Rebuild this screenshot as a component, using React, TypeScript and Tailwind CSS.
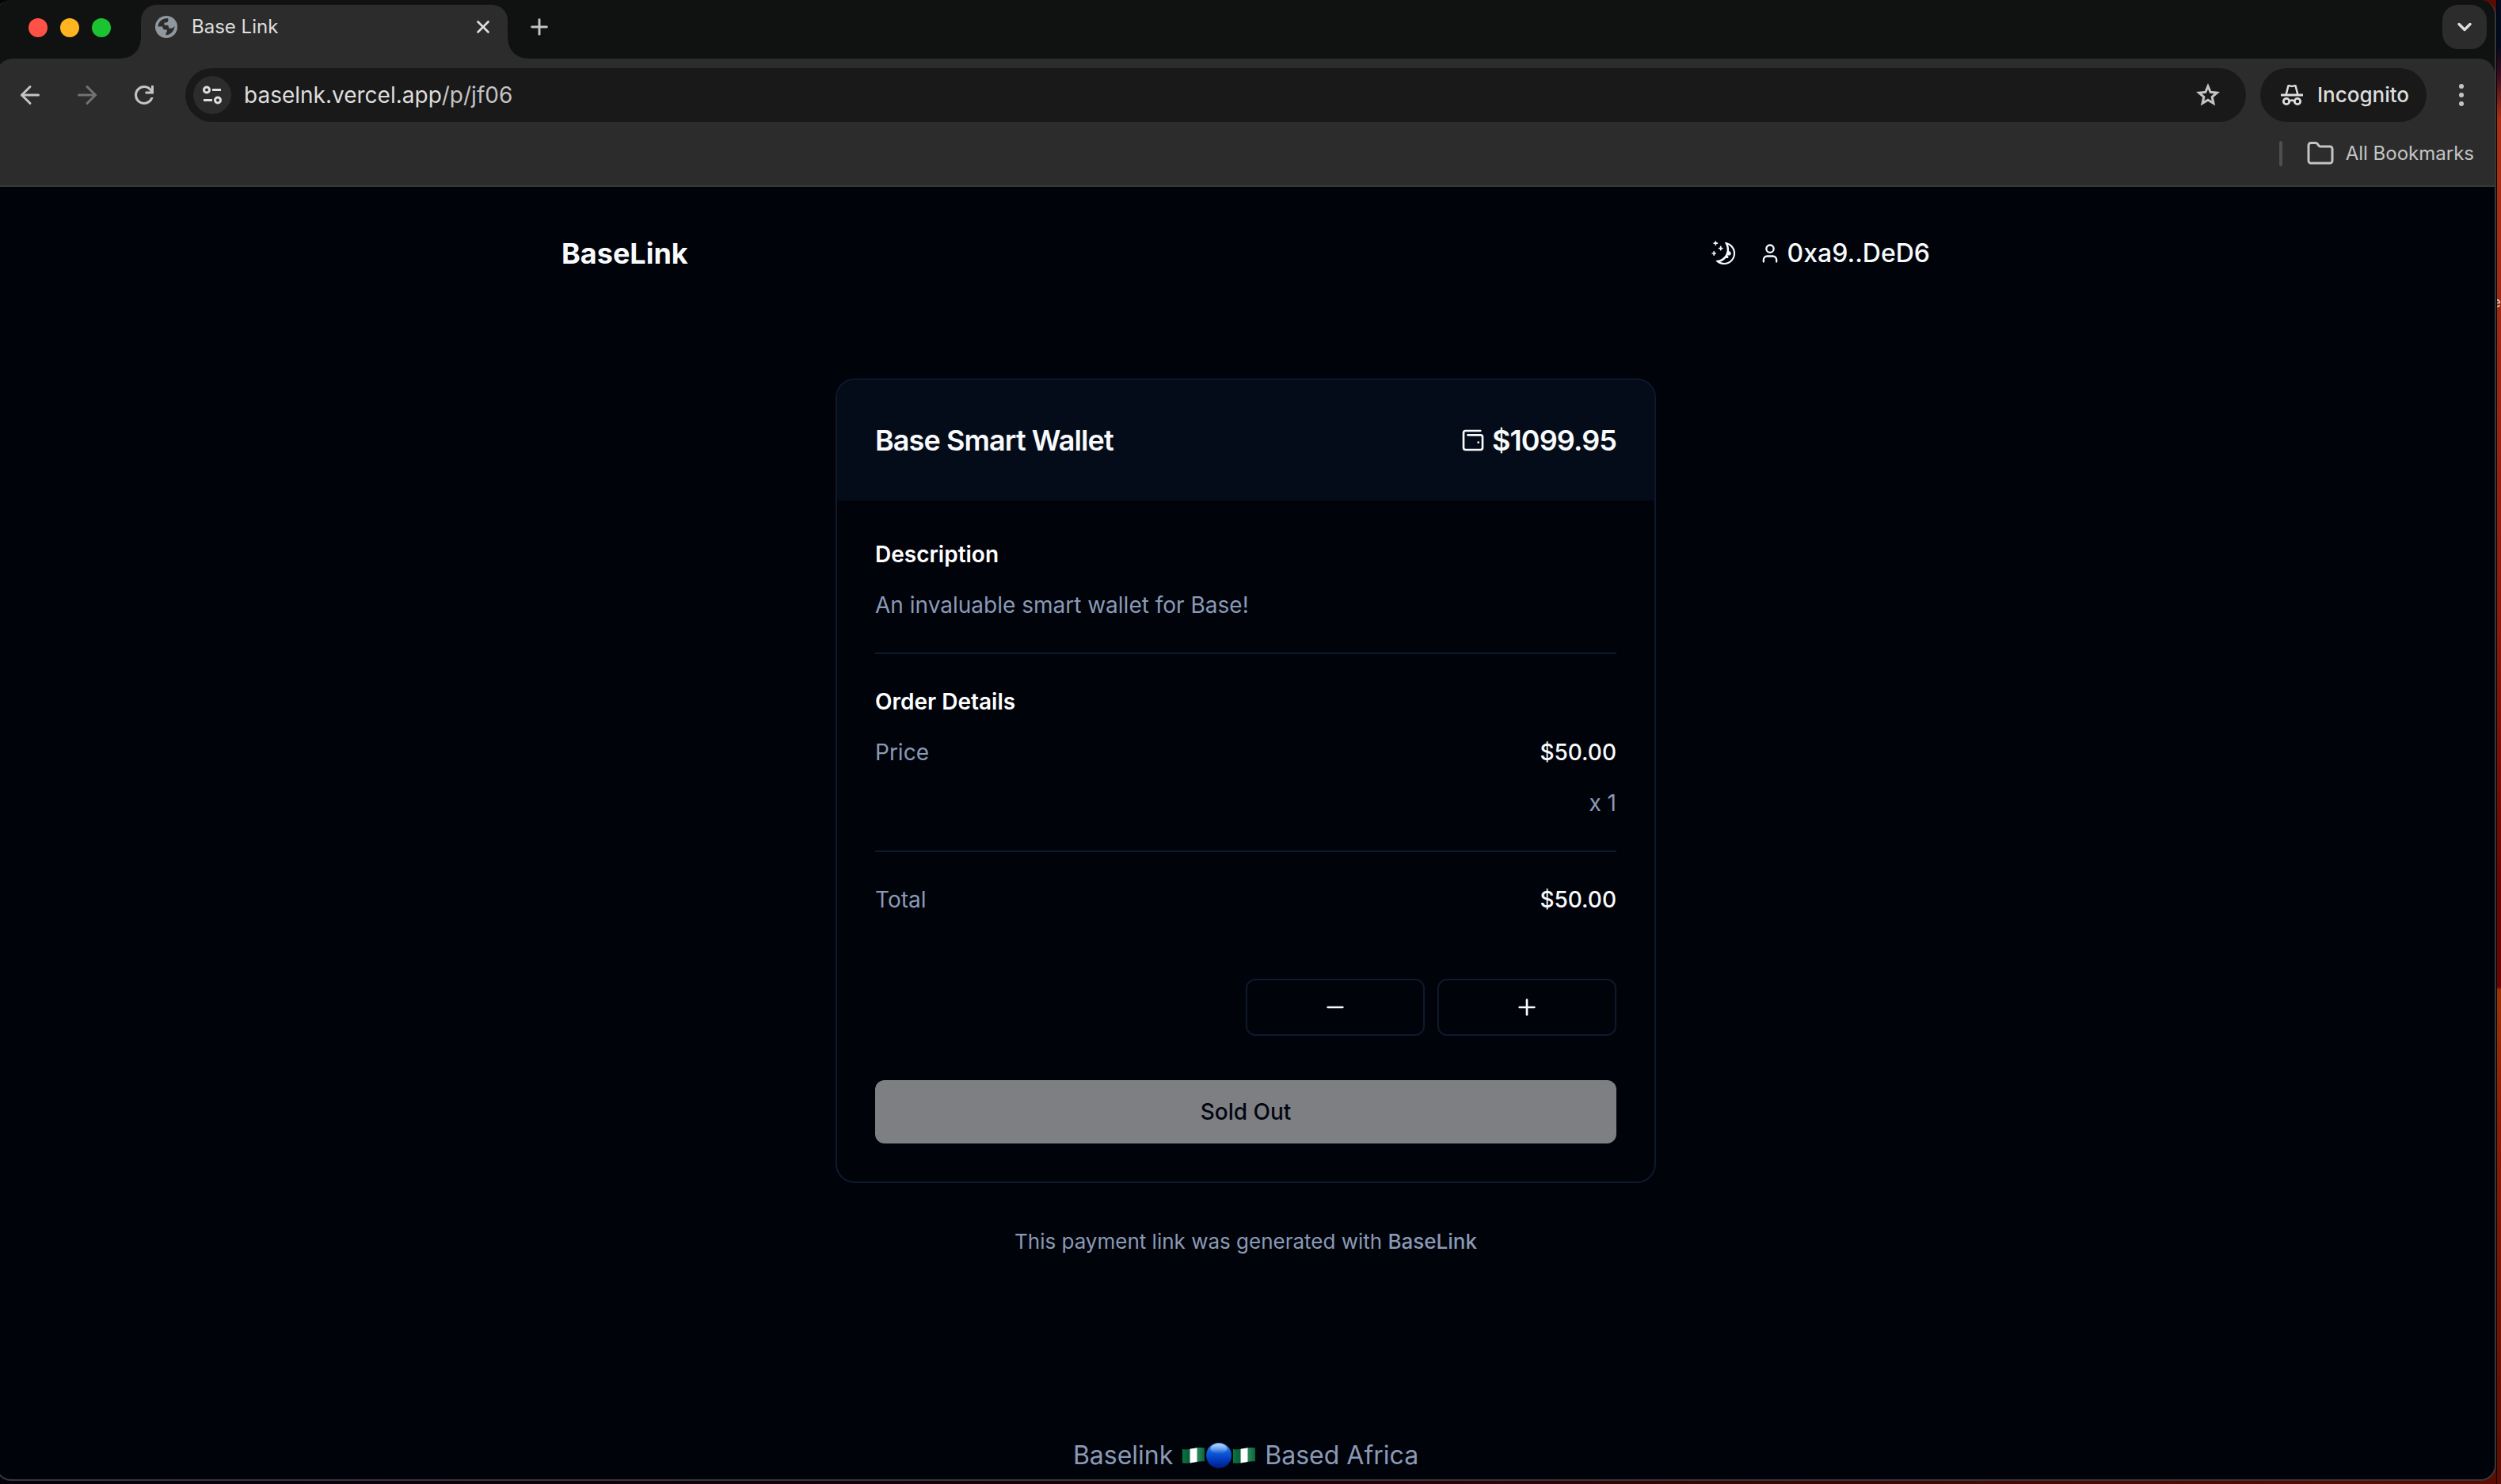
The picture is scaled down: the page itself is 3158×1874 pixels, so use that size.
import React from "react";
import { ArrowLeft, ArrowRight, Folder, Minus, Plus, User, WalletMinimal, X, ChevronDown } from "lucide-react";
import { RxMoon } from "react-icons/rx";

const GlobeIcon = () => (
  <svg viewBox="0 0 24 24" className="size-7 shrink-0" aria-hidden="true">
    <circle cx="12" cy="12" r="12" fill="#8f979f" />
    <path
      d="M3 11.600C3.200 7 7 3 12 2.800h2v2.400c0 1.200-1 2-2.200 2H9.800v2.800h2.800c1.200 0 2 .9 2 2v1.600h2.800c1.600 0 3-1.200 3.600-2.800C21 15.800 17 20.600 11.600 21v-3h1v-3h-2c-1.500 0-2.600-1-2.600-2.600v-.8z"
      fill="#2c2c2c"
    />
  </svg>
);

const ReloadIcon = () => (
  <svg viewBox="0 0 24 24" className="size-9" aria-hidden="true">
    <path
      d="M12 20q-3.350 0-5.675-2.325T4 12t2.325-5.675T12 4q1.725 0 3.300.7125T18 6.750V4h2v7h-7V9h4.200q-.8-1.400-2.187-2.200T12 6Q9.500 6 7.750 7.750T6 12t1.750 4.250T12 18q1.925 0 3.475-1.100T17.650 14h2.100q-.7 2.650-2.850 4.325T12 20"
      fill="currentColor"
    />
  </svg>
);

const TuneIcon = () => (
  <svg viewBox="0 0 26 26" className="size-[26px]" fill="none" stroke="#dedede" strokeWidth="3" aria-hidden="true">
    <circle cx="6" cy="6.500" r="3.500" />
    <path d="M13 6.500h11M2 19.500h11" />
    <circle cx="20" cy="19.500" r="3.500" />
  </svg>
);

const StarIcon = () => (
  <svg viewBox="0 0 24 24" className="size-9" aria-hidden="true">
    <path
      d="M8.850 16.825 12 14.925l3.150 1.925-.825-3.600 2.775-2.400-3.650-.325L12 7.125l-1.450 3.375-3.650.325 2.775 2.425zM5.825 21l1.625-7.025L2 9.250l7.200-.625L12 2l2.800 6.625 7.200.625-5.450 4.725L18.175 21 12 17.275z"
      fill="currentColor"
    />
  </svg>
);

const IncognitoIcon = () => (
  <svg viewBox="0 0 28 28" className="size-7" fill="none" stroke="#dedede" aria-hidden="true">
    <path d="M0 14h28" strokeWidth="3" />
    <path d="M6.500 14 9.400 2.500c1.800-.6 3 .4 4.600.4s2.800-1 4.600-.4L21.500 14" strokeWidth="2.500" strokeLinejoin="round" />
    <circle cx="7" cy="22" r="3.700" strokeWidth="2.800" />
    <circle cx="21" cy="22" r="3.700" strokeWidth="2.800" />
    <path d="M10.500 22c2-1.600 5-1.600 7 0" strokeWidth="2.500" />
  </svg>
);

const FlagIcon = () => (
  <svg viewBox="0 0 28 20" className="h-5 w-7" aria-hidden="true">
    <defs>
      <clipPath id="flag-wave">
        <path d="M0 2c5 1 8 0 14-1s9-1.500 14-.5v17c-5-1-8 .3-14 1.300S5 20.500 0 19.500z" />
      </clipPath>
      <linearGradient id="flag-shade" x1="0" x2="1" y1="0" y2="0">
        <stop offset="0" stopColor="#000" stopOpacity="0.050" />
        <stop offset="0.350" stopColor="#000" stopOpacity="0.250" />
        <stop offset="0.600" stopColor="#fff" stopOpacity="0.150" />
        <stop offset="1" stopColor="#000" stopOpacity="0.200" />
      </linearGradient>
    </defs>
    <g clipPath="url(#flag-wave)">
      <path d="M0 0h28v20H0z" fill="#0b7a45" />
      <path d="M9.500 0h9v20h-9z" fill="#fff" />
      <path d="M0 0h9.500v20H0zM18.500 0H28v20h-9.500z" fill="url(#flag-shade)" />
    </g>
  </svg>
);

const BlueCircle = () => (
  <svg viewBox="0 0 32 32" className="size-8" aria-hidden="true">
    <defs>
      <linearGradient id="ball" x1="0" x2="0" y1="0" y2="1">
        <stop offset="0" stopColor="#5fa0f4" />
        <stop offset="0.350" stopColor="#0f5fdc" />
        <stop offset="0.600" stopColor="#0443c4" />
        <stop offset="1" stopColor="#031a8c" />
      </linearGradient>
      <linearGradient id="shine" x1="0" x2="0" y1="0" y2="1">
        <stop offset="0" stopColor="#cfe4ff" stopOpacity="0.800" />
        <stop offset="1" stopColor="#cfe4ff" stopOpacity="0" />
      </linearGradient>
    </defs>
    <circle cx="16" cy="16" r="16" fill="url(#ball)" />
    <ellipse cx="16" cy="7.500" rx="10.500" ry="6.500" fill="url(#shine)" />
  </svg>
);

const TabStrip = () => (
  <div className="flex h-[74px] items-end bg-[#101211]">
    <div className="flex h-full items-center gap-4 pr-[38px] pb-1 pl-10">
      <button aria-label="Close window" className="size-6 rounded-full bg-[#ff5148]" />
      <button aria-label="Minimize window" className="size-6 rounded-full bg-[#ffb422]" />
      <button aria-label="Zoom window" className="size-6 rounded-full bg-[#1bc333]" />
    </div>
    <div className="relative flex h-[68px] w-[463px] items-center rounded-t-[20px] bg-[#2c2c2c] pr-[18px] pb-3 pl-[18px]">
      <span className="absolute bottom-0 -left-6 size-6 bg-[radial-gradient(circle_at_0_0,#101211_23px,#2c2c2c_24px)]" />
      <span className="absolute -right-6 bottom-0 size-6 bg-[radial-gradient(circle_at_100%_0,#101211_23px,#2c2c2c_24px)]" />
      <GlobeIcon />
      <span className="ml-[18px] flex-1 text-[24px] leading-8 text-[#dedede]">Base Link</span>
      <button aria-label="Close tab" className="text-[#dedede]">
        <X size={26} strokeWidth={2.5} />
      </button>
    </div>
    <button aria-label="New tab" className="mb-6 ml-6 text-[#c4c4c4]">
      <Plus size={32} strokeWidth={2.2} />
    </button>
    <button
      aria-label="Search tabs"
      className="mr-[10px] mb-3 ml-auto flex size-14 items-center justify-center rounded-[20px] bg-[#2c2c2c] text-[#dedede]"
    >
      <ChevronDown size={28} strokeWidth={3} />
    </button>
  </div>
);

const Toolbar = () => (
  <div className="bg-[#101211]">
    <div className="flex h-[92px] items-center rounded-t-[20px] bg-[#2c2c2c] pr-[38px] pl-6 text-[#c4c4c4]">
      <button aria-label="Back">
        <ArrowLeft size={36} strokeWidth={2} />
      </button>
      <button aria-label="Forward" className="ml-9 text-[#737373]">
        <ArrowRight size={36} strokeWidth={2} />
      </button>
      <button aria-label="Reload" className="ml-9">
        <ReloadIcon />
      </button>
      <div className="ml-[34px] flex h-[68px] flex-1 items-center rounded-full bg-[#191919] pr-[30px] pl-[10px]">
        <button aria-label="View site information" className="flex size-12 items-center justify-center rounded-full bg-[#2c2c2c]">
          <TuneIcon />
        </button>
        <div className="ml-4 flex-1 text-[28px] leading-9 text-[#dedede]">
          baselnk.vercel.app<span className="text-[#c4c4c4]">/p/jf06</span>
        </div>
        <button aria-label="Bookmark this tab">
          <StarIcon />
        </button>
      </div>
      <div className="ml-[18px] flex h-[68px] w-[210px] items-center gap-[18px] rounded-full bg-[#191919] pl-[26px] text-[26px] leading-9 font-medium text-[#dedede]">
        <IncognitoIcon />
        Incognito
      </div>
      <button aria-label="Menu" className="ml-10 flex w-2 flex-col items-center gap-[5px]">
        <span className="size-[6px] rounded-full bg-[#c4c4c4]" />
        <span className="size-[6px] rounded-full bg-[#c4c4c4]" />
        <span className="size-[6px] rounded-full bg-[#c4c4c4]" />
      </button>
    </div>
  </div>
);

const BookmarksBar = () => (
  <div className="flex h-[70px] items-start justify-end border-b-2 border-[#373837] bg-[#2c2c2c] pt-2 pr-[26px] text-[#c4c4c4]">
    <div className="flex h-10 items-center">
      <span className="h-8 w-1 rounded-full bg-[#4f4f4f]" />
      <button className="ml-[30px] flex items-center gap-[14px] text-[24px] leading-8">
        <Folder size={36} strokeWidth={2} />
        All Bookmarks
      </button>
    </div>
  </div>
);

const Header = () => (
  <header className="mx-auto mt-[60px] flex h-12 w-full max-w-[1728px] items-center justify-between text-[#f8fafc]">
    <a href="#home" className="text-[36px] leading-[48px] font-bold">
      BaseLink
    </a>
    <div className="flex items-center">
      <button aria-label="Toggle theme">
        <RxMoon size={32} />
      </button>
      <button className="ml-7 flex items-center gap-2 text-[32px] leading-[48px] font-medium">
        <User size={28} />
        0xa9..DeD6
      </button>
    </div>
  </header>
);

const Row = ({ label, value }: { label: string; value: string }) => (
  <div className="flex items-center justify-between">
    <dt className="text-[#8a9ab5]">{label}</dt>
    <dd className="font-medium text-[#f8fafc]">{value}</dd>
  </div>
);

const PaymentCard = () => (
  <section className="mx-auto mt-[134px] w-full max-w-[1036px] overflow-hidden rounded-[24px] border-2 border-[#0f192c]">
    <div className="flex h-[152px] items-center justify-between bg-[#050c19] px-12 text-[36px] leading-[56px] font-semibold text-[#f8fafc]">
      <h1 className="tracking-tight">Base Smart Wallet</h1>
      <div className="flex items-center gap-2 tracking-tight">
        <WalletMinimal size={32} />
        $1099.95
      </div>
    </div>
    <div className="p-12 text-[28px] leading-10">
      <h2 className="font-semibold text-white">Description</h2>
      <p className="mt-6 text-[#8a9ab5]">An invaluable smart wallet for Base!</p>
      <hr className="my-10 border-t-2 border-[#0f192c]" />
      <h2 className="font-semibold text-white">Order Details</h2>
      <dl className="mt-6">
        <Row label="Price" value="$50.00" />
        <dd className="mt-6 text-right text-[#8a9ab5]">x 1</dd>
      </dl>
      <hr className="my-10 border-t-2 border-[#0f192c]" />
      <dl>
        <Row label="Total" value="$50.00" />
      </dl>
      <div className="mt-20 flex justify-end gap-4 text-[#f8fafc]">
        <button aria-label="Decrease quantity" className="flex h-[72px] w-[226px] items-center justify-center rounded-xl border-2 border-[#0f192c]">
          <Minus size={32} />
        </button>
        <button aria-label="Increase quantity" className="flex h-[72px] w-[226px] items-center justify-center rounded-xl border-2 border-[#0f192c]">
          <Plus size={32} />
        </button>
      </div>
      <button disabled className="mt-14 h-20 w-full rounded-xl bg-[#7e7f83] font-medium text-[#020611]">
        Sold Out
      </button>
    </div>
  </section>
);

export default function App() {
  return (
    <div className="relative flex min-h-screen flex-col overflow-hidden bg-[linear-gradient(180deg,#000a20_0%,#000a20_3%,#3c0a20_5%,#a83210_8%,#a02c10_20%,#8a1c08_42%,#6a0500_60%,#6a0500_66.500%,#9a3500_66.700%,#8a1e00_76%,#600c00_100%)] font-['Inter',sans-serif]">
      <span aria-hidden="true" className="absolute top-[370px] right-0 text-[18px] leading-6 text-[#d0d0d0]">
        e
      </span>
      <div className="relative mr-[5px] -ml-1.5 flex flex-1 flex-col border-r border-black bg-[linear-gradient(90deg,#05000a_0%,#1e0009_50%,#5a0c00_96%)]">
        <div className="mb-1 flex flex-1 flex-col overflow-hidden rounded-[20px] border-2 border-t-0 border-[#37383a] bg-[#01030b]">
          <TabStrip />
          <Toolbar />
          <BookmarksBar />
          <main className="flex flex-1 flex-col">
            <Header />
            <PaymentCard />
            <p className="mt-[54px] text-center text-[26px] leading-10 text-[#8a9ab5]">
              This payment link was generated with{" "}
              <a href="#baselink" className="font-medium">
                BaseLink
              </a>
            </p>
            <footer className="mt-auto mb-[6px] flex items-center justify-center text-[32px] leading-[48px] text-[#8a9ab5]">
              Baselink
              <span className="mx-3 flex items-center gap-[2px]">
                <FlagIcon />
                <BlueCircle />
                <FlagIcon />
              </span>
              Based Africa
            </footer>
          </main>
        </div>
      </div>
    </div>
  );
}
